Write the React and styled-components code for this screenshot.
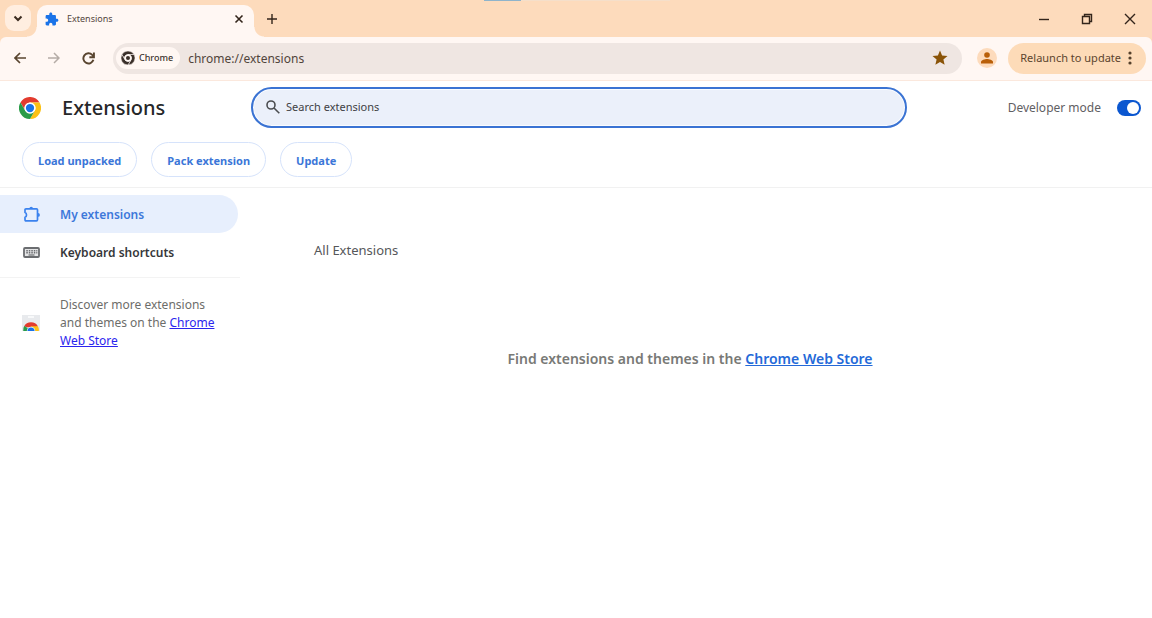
import React from "react";
import styled, { createGlobalStyle, css } from "styled-components";

const GlobalStyle = createGlobalStyle`
  * { box-sizing: border-box; }
  body {
    margin: 0;
    background: #fff;
    color: #5f6063;
    font-family: "Noto Sans", "Open Sans", sans-serif;
    font-size: 12px;
    line-height: 18px;
  }
  button, input { font: inherit; color: inherit; }
  button { border: 0; padding: 0; background: none; cursor: pointer; }
  svg { display: block; flex: none; }
`;

const TabStrip = styled.header`
  position: relative;
  display: flex;
  align-items: flex-end;
  height: 37px;
  padding: 0 14px 0 5px;
  background: #fddbbc;
`;

const LoadingMark = styled.span`
  position: absolute;
  top: 0;
  left: 42%;
  width: 186px;
  height: 1px;
  background: linear-gradient(to right, #8fb4cb 37px, #f5dfca 37px);
`;

const TabSearch = styled.button`
  display: grid;
  place-items: center;
  width: 26px;
  height: 26px;
  margin: 0 6px 6px 0;
  border-radius: 9px;
  background: #ffeee0;
  color: #3b2c20;
`;

const Tab = styled.div`
  position: relative;
  display: flex;
  align-items: center;
  width: 217px;
  height: 32px;
  padding: 0 9px 4px 8px;
  border-radius: 10px 10px 0 0;
  background: #fff7f3;
  &::before, &::after {
    content: "";
    position: absolute;
    bottom: 0;
    width: 10px;
    height: 10px;
  }
  &::before {
    right: 100%;
    background: radial-gradient(circle at 0 0, transparent 9px, #fff7f3 10px);
  }
  &::after {
    left: 100%;
    background: radial-gradient(circle at 100% 0, transparent 9px, #fff7f3 10px);
  }
`;

const TabTitle = styled.span`
  flex: 1;
  padding-left: 8px;
  font-size: 9px;
  color: #54463d;
`;

const IconButton = styled.button`
  display: grid;
  place-items: center;
  width: ${(p) => p.$w || 14}px;
  height: ${(p) => p.$h || 14}px;
  color: ${(p) => p.$color || "#33251b"};
`;

const NewTab = styled(IconButton)`
  margin: 0 auto 9px 10px;
`;

const WindowControls = styled.div`
  display: flex;
  gap: 27px;
  padding-bottom: 11px;
`;

const ToolbarBack = styled.div`
  background: #fddbbc;
`;

const Toolbar = styled.div`
  display: flex;
  align-items: center;
  height: 44px;
  padding: 0 6px 1px 12px;
  border-bottom: 1px solid #fbe8dd;
  border-radius: 6px 6px 0 0;
  background: #fff7f3;
`;

const NavButtons = styled.div`
  display: flex;
  gap: 18px;
  padding-right: 17px;
`;

const Omnibox = styled.div`
  display: flex;
  flex: 1;
  align-items: center;
  height: 31px;
  padding: 0 13px 0 3px;
  border-radius: 16px;
  background: #efe6e2;
`;

const SiteChip = styled.button`
  display: flex;
  align-items: center;
  gap: 4px;
  height: 22px;
  padding: 0 7px 0 5px;
  border-radius: 11px;
  background: #fff7f3;
  color: #40352f;
  font-size: 9px;
  font-weight: 500;
`;

const Address = styled.input`
  flex: 1;
  min-width: 0;
  height: 22px;
  padding: 0 0 0 8px;
  border: 0;
  outline: 0;
  background: none;
  color: #51443b;
`;

const Avatar = styled.button`
  display: grid;
  place-items: center;
  width: 20px;
  height: 20px;
  margin: 0 11px 0 15px;
  border-radius: 50%;
  background: #fddbbc;
`;

const Relaunch = styled.button`
  display: flex;
  align-items: center;
  gap: 5px;
  height: 31px;
  padding: 0 12px;
  border-radius: 16px;
  background: #fddbb8;
  color: #5c452e;
  font-size: 11px;
`;

const PageBar = styled.div`
  display: grid;
  grid-template-columns: minmax(200px, 251px) minmax(200px, 656px) 1fr;
  align-items: center;
  padding: 6px 11px 6px 0;
`;

const Brand = styled.div`
  display: flex;
  align-items: center;
  gap: 21px;
  padding-left: 19px;
`;

const Title = styled.h1`
  margin: 0;
  color: #262729;
  font-size: 20px;
  font-weight: 500;
  line-height: 28px;
`;

const SearchBox = styled.label`
  display: flex;
  align-items: center;
  gap: 6px;
  height: 41px;
  padding: 0 14px 2px 13px;
  border: 2px solid #3a73d3;
  border-radius: 21px;
  background: #ebf0fa;
  box-shadow: inset 0 0 0 1px #fafcff;
  color: #4b4d50;
`;

const SearchInput = styled.input`
  flex: 1;
  min-width: 0;
  padding: 0;
  border: 0;
  outline: 0;
  background: none;
  font-size: 11px;
  &::placeholder { color: #3f4144; opacity: 1; }
`;

const DevMode = styled.label`
  display: flex;
  align-items: center;
  justify-content: flex-end;
  gap: 16px;
`;

const Switch = styled.input`
  appearance: none;
  display: flex;
  align-items: center;
  justify-content: flex-end;
  width: 24px;
  height: 16px;
  margin: 0;
  padding: 2px;
  border-radius: 8px;
  background: #0b57d0;
  &::before {
    content: "";
    width: 12px;
    height: 12px;
    border-radius: 50%;
    background: #fff;
  }
  &:not(:checked) {
    justify-content: flex-start;
    background: #9aa0a6;
  }
`;

const Actions = styled.div`
  display: flex;
  gap: 14px;
  padding: 8px 22px 10px;
  border-bottom: 1px solid #f1f1f1;
`;

const PillButton = styled.button`
  height: 35px;
  padding: 2px 15px 0;
  border: 1px solid #d6e3fb;
  border-radius: 18px;
  color: #3b76d8;
  font-size: 11px;
  font-weight: 700;
`;

const Body = styled.div`
  display: flex;
`;

const Sidebar = styled.nav`
  width: 240px;
  padding-top: 7px;
`;

const NavLink = styled.a`
  display: flex;
  align-items: center;
  gap: 20px;
  height: 38px;
  margin-right: 2px;
  padding: 1px 0 0 23px;
  border-radius: 0 19px 19px 0;
  color: #36373a;
  font-weight: 600;
  text-decoration: none;
  ${(p) => p.$active && css`
    background: #e7effd;
    color: #3d78da;
  `}
`;

const Discover = styled.div`
  display: flex;
  align-items: center;
  gap: 20px;
  margin-top: 6px;
  padding: 18px 16px 0 22px;
  border-top: 1px solid #f3f3f3;
  color: #6d6d6a;
`;

const Paragraph = styled.p`
  margin: 0;
`;

const StoreLink = styled.a`
  color: ${(p) => p.$color};
`;

const Content = styled.main`
  flex: 1;
  padding: 52px 86px 0 74px;
`;

const SectionTitle = styled.h2`
  margin: 0;
  color: #55575a;
  font-size: 13px;
  font-weight: 400;
  line-height: 20px;
`;

const EmptyMessage = styled.p`
  margin: 89px 0 0;
  color: #787976;
  font-size: 14px;
  font-weight: 600;
  line-height: 20px;
  text-align: center;
`;

const Stroke = ({ size = 12, width = 2, children }) => (
  <svg width={size} height={size} viewBox="0 0 12 12" fill="none" stroke="currentColor" strokeWidth={width}>
    {children}
  </svg>
);

const puzzlePath =
  "M20.5 11H19V7c0-1.100-.9-2-2-2h-4V3.500C13 2.120 11.880 1 10.500 1S8 2.120 8 3.500V5H4c-1.100 0-1.990.9-1.990 2v3.800H3.500c1.490 0 2.700 1.210 2.700 2.700s-1.210 2.700-2.700 2.700H2V20c0 1.100.9 2 2 2h3.800v-1.500c0-1.490 1.210-2.700 2.700-2.700s2.700 1.210 2.700 2.700V22H17c1.100 0 2-.9 2-2v-4h1.500c1.380 0 2.500-1.120 2.500-2.500S21.880 11 20.500 11z";

const ChromeLogo = ({ size, mono }) => {
  const [red, yellow, green, blue, gap] = mono
    ? ["#3a2f29", "#3a2f29", "#3a2f29", "#3a2f29", "#fff7f3"]
    : ["#e33b2e", "#fbc116", "#2a9c49", "#1a73e8", "#fff"];
  const edge = mono ? gap : "none";
  return (
    <svg width={size} height={size} viewBox="0 0 48 48" stroke={edge} strokeWidth={mono ? 2 : 0}>
      <path fill={red} d="M3.200 12A24 24 0 0 1 44.800 12H24A12 12 0 0 0 13.600 30Z" />
      <path fill={yellow} d="M44.800 12A24 24 0 0 1 24 48L34.400 30A12 12 0 0 0 24 12Z" />
      <path fill={green} d="M24 48A24 24 0 0 1 3.200 12L13.600 30A12 12 0 0 0 34.400 30Z" />
      <circle cx="24" cy="24" r="12" fill={gap} stroke="none" />
      <circle cx="24" cy="24" r={mono ? 7 : 9} fill={blue} stroke="none" />
    </svg>
  );
};

const StoreIcon = () => (
  <svg width="18" height="16" viewBox="0 0 18 16">
    <path fill="#e8eaed" d="M0 0h18v16H0z" />
    <path fill="#f8f9fa" d="M6 1h6v2H6z" />
    <path fill="#e33b2e" d="M2 11.500a8 8 0 0 1 14 0L9 13z" />
    <path fill="#2a9c49" d="M2.200 11A8.500 8.500 0 0 0 1.200 16H7l-.5-2.500z" />
    <path fill="#fbc116" d="M9 11.200h7a8.500 8.500 0 0 1 .8 4.800H11z" />
    <path fill="#fff" d="M4.800 16a4.200 4.200 0 0 1 8.400 0z" />
    <path fill="#1a73e8" d="M5.400 16a3.600 3.600 0 0 1 7.200 0z" />
  </svg>
);

const KeyboardIcon = () => (
  <svg width="17" height="12" viewBox="0 0 17 12" fill="none" stroke="#6b6d70">
    <rect x="1" y="1" width="15" height="9" rx="1" strokeWidth="1.800" fill="#e4e5e6" />
    <path strokeWidth="1.400" strokeDasharray="1.500 1" d="M3.300 3.700h11M3.300 5.800h11" />
    <path strokeWidth="1.200" d="M5.500 8h6" />
  </svg>
);

export default function App() {
  return (
    <>
      <GlobalStyle />
      <TabStrip>
        <LoadingMark />
        <TabSearch aria-label="Search tabs">
          <Stroke size={12}><path d="M2.500 4.500 6 8l3.500-3.500" /></Stroke>
        </TabSearch>
        <Tab>
          <svg width="14" height="14" viewBox="1 0 23 23" fill="#1a73e8"><path d={puzzlePath} /></svg>
          <TabTitle>Extensions</TabTitle>
          <IconButton aria-label="Close tab" $w={12}>
            <Stroke size={12} width={1.6}><path d="m2.500 2.500 7 7m0-7-7 7" /></Stroke>
          </IconButton>
        </Tab>
        <NewTab aria-label="New tab" $w={16} $h={18}>
          <Stroke size={12} width={1.4}><path d="M6 1v10M1 6h10" /></Stroke>
        </NewTab>
        <WindowControls>
          <IconButton aria-label="Minimize" $w={16}>
            <Stroke size={12} width={1.4}><path d="M1 6.500h10" /></Stroke>
          </IconButton>
          <IconButton aria-label="Restore" $w={16}>
            <Stroke size={12} width={1.4}><path d="M1.500 3.500h7v7h-7zM3.500 3.500v-2h7v7h-2" /></Stroke>
          </IconButton>
          <IconButton aria-label="Close" $w={16}>
            <Stroke size={12} width={1.4}><path d="m1 1 10 10m0-10L1 11" /></Stroke>
          </IconButton>
        </WindowControls>
      </TabStrip>
      <ToolbarBack>
        <Toolbar>
          <NavButtons>
            <IconButton aria-label="Back" $w={16} $color="#59452f">
              <Stroke size={12} width={1.7}><path d="M12 6H1m5-5L1 6l5 5" /></Stroke>
            </IconButton>
            <IconButton aria-label="Forward" $w={16} $color="#b5aca6">
              <Stroke size={12} width={1.5}><path d="M0 6h11M6 1l5 5-5 5" /></Stroke>
            </IconButton>
            <IconButton aria-label="Reload" $w={16} $color="#59452f">
              <Stroke size={13} width={1.8}><path d="M10.500 7.200A4.700 4.700 0 1 1 9.400 2.700L10.800 4M11 .5v4.300H6.800" /></Stroke>
            </IconButton>
          </NavButtons>
          <Omnibox>
            <SiteChip>
              <ChromeLogo size={14} mono />
              Chrome
            </SiteChip>
            <Address aria-label="Address" defaultValue="chrome://extensions" />
            <IconButton aria-label="Bookmark this tab" $w={18} $h={18} $color="#8a5408">
              <svg width="18" height="18" viewBox="0 0 24 24" fill="currentColor">
                <path d="M12 17.270 18.180 21l-1.640-7.030L22 9.240l-7.190-.61L12 2 9.190 8.630 2 9.240l5.460 4.730L5.820 21z" />
              </svg>
            </IconButton>
          </Omnibox>
          <Avatar aria-label="Profile">
            <svg width="12" height="12" viewBox="0 0 12 12" fill="#b95f08">
              <circle cx="6" cy="3" r="2.800" />
              <path d="M0 11.500V10c0-2 4-3 6-3s6 1 6 3v1.500z" />
            </svg>
          </Avatar>
          <Relaunch>
            Relaunch to update
            <svg width="8" height="14" viewBox="0 0 8 14" fill="#54402b">
              <circle cx="4" cy="2" r="1.600" />
              <circle cx="4" cy="7" r="1.600" />
              <circle cx="4" cy="12" r="1.600" />
            </svg>
          </Relaunch>
        </Toolbar>
      </ToolbarBack>
      <PageBar>
        <Brand>
          <ChromeLogo size={22} />
          <Title>Extensions</Title>
        </Brand>
        <SearchBox>
          <svg width="14" height="14" viewBox="0 0 14 14" fill="none" stroke="currentColor" strokeWidth="1.600">
            <circle cx="5" cy="5" r="4" />
            <path d="m8 8 5.300 5.300" />
          </svg>
          <SearchInput type="text" placeholder="Search extensions" aria-label="Search extensions" />
        </SearchBox>
        <DevMode>
          Developer mode
          <Switch type="checkbox" role="switch" defaultChecked />
        </DevMode>
      </PageBar>
      <Actions>
        <PillButton>Load unpacked</PillButton>
        <PillButton>Pack extension</PillButton>
        <PillButton>Update</PillButton>
      </Actions>
      <Body>
        <Sidebar>
          <NavLink href="#extensions" $active>
            <svg width="17" height="17" viewBox="0 0 17 17">
              <path fill="none" stroke="#3b82ee" strokeWidth="1.700" strokeLinejoin="round" d="M3 2.800h10.500q1 0 1 1v10q0 1-1 1H3q-1 0-1-1v-2.500c2-.6 2-4.200 0-4.800V3.800q0-1 1-1z" />
              <path fill="#3b82ee" d="M6.400 2.500a1.800 1.800 0 0 1 3.600 0zM15 7a1.900 1.900 0 0 1 0 3.800z" />
            </svg>
            My extensions
          </NavLink>
          <NavLink href="#shortcuts">
            <KeyboardIcon />
            Keyboard shortcuts
          </NavLink>
          <Discover>
            <StoreIcon />
            <Paragraph>
              Discover more extensions and themes on the{" "}
              <StoreLink href="#store" $color="#2b25ee">Chrome Web Store</StoreLink>
            </Paragraph>
          </Discover>
        </Sidebar>
        <Content>
          <SectionTitle>All Extensions</SectionTitle>
          <EmptyMessage>
            Find extensions and themes in the <StoreLink href="#store" $color="#2469d8">Chrome Web Store</StoreLink>
          </EmptyMessage>
        </Content>
      </Body>
    </>
  );
}
